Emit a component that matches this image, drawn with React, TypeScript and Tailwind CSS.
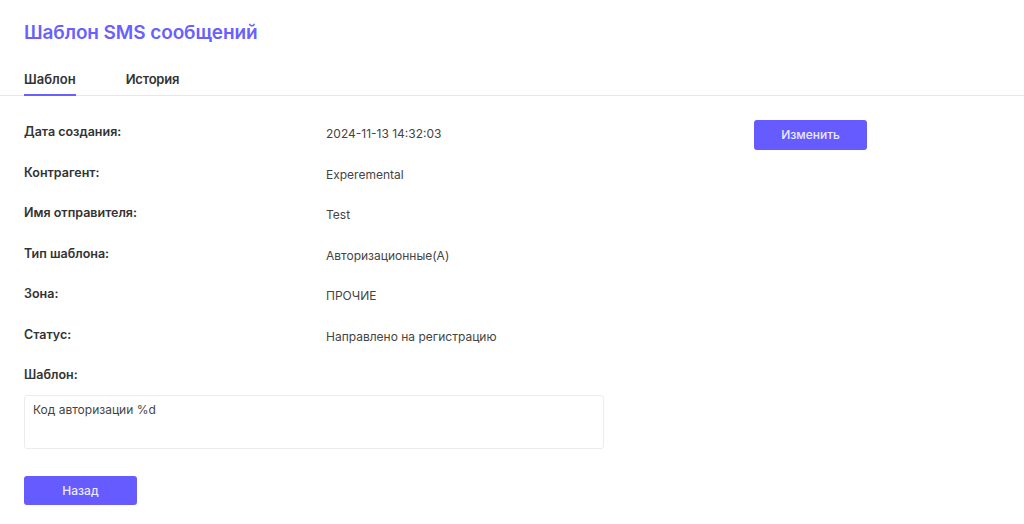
import React from "react";

const rows: [string, string][] = [
  ["Дата создания:", "2024-11-13 14:32:03"],
  ["Контрагент:", "Experemental"],
  ["Имя отправителя:", "Test"],
  ["Тип шаблона:", "Авторизационные(А)"],
  ["Зона:", "ПРОЧИЕ"],
  ["Статус:", "Направлено на регистрацию"],
];

export default function App() {
  return (
    <div
      className="w-[1024px] h-[524px] bg-white overflow-hidden"
      style={{ fontFamily: "Inter, 'Noto Sans', sans-serif" }}
    >
      <div className="pl-6 pt-[21px]">
        <h1 className="text-[19px] leading-[24px] font-semibold text-[#6a5fff] tracking-[-0.1px]">
          Шаблон SMS сообщений
        </h1>
      </div>
      <div className="mt-[24px] border-b border-[#e6e6ee] pl-6 flex gap-[50px]">
        <div className="pb-[5px] border-b-2 border-[#6a5fff] text-[13px] leading-[20px] font-semibold text-[#333] -mb-px">
          Шаблон
        </div>
        <div className="pb-[5px] text-[13px] leading-[20px] font-semibold text-[#333] tracking-[-0.2px]">
          История
        </div>
      </div>
      <div className="pl-6 pt-[26px]">
        {rows.map(([label, value], i) => (
          <div key={label} className="flex h-[40.5px] items-start">
            <div className="w-[302px] text-[12.5px] leading-[20px] font-semibold text-[#333]">
              {label}
            </div>
            <div className="w-[428px] pt-[2px] text-[12px] leading-[20px] text-[#444]">
              {value}
            </div>
            {i === 0 && (
              <button className="mt-[-2px] w-[113px] h-[30px] rounded-[3px] bg-[#655bff] text-[12px] font-medium text-[#ecebff]">
                Изменить
              </button>
            )}
          </div>
        ))}
        <div className="h-[30px] text-[12.5px] leading-[20px] font-semibold text-[#333]">
          Шаблон:
        </div>
        <div className="w-[580px] h-[54px] border border-[#ececf0] rounded-[3px] px-[8px] pt-[4px] text-[12px] leading-[20px] text-[#444]">
          Код авторизации %d
        </div>
        <button className="mt-[27px] w-[113px] h-[29px] rounded-[3px] bg-[#655bff] text-[12px] font-medium text-[#ecebff]">
          Назад
        </button>
      </div>
    </div>
  );
}
